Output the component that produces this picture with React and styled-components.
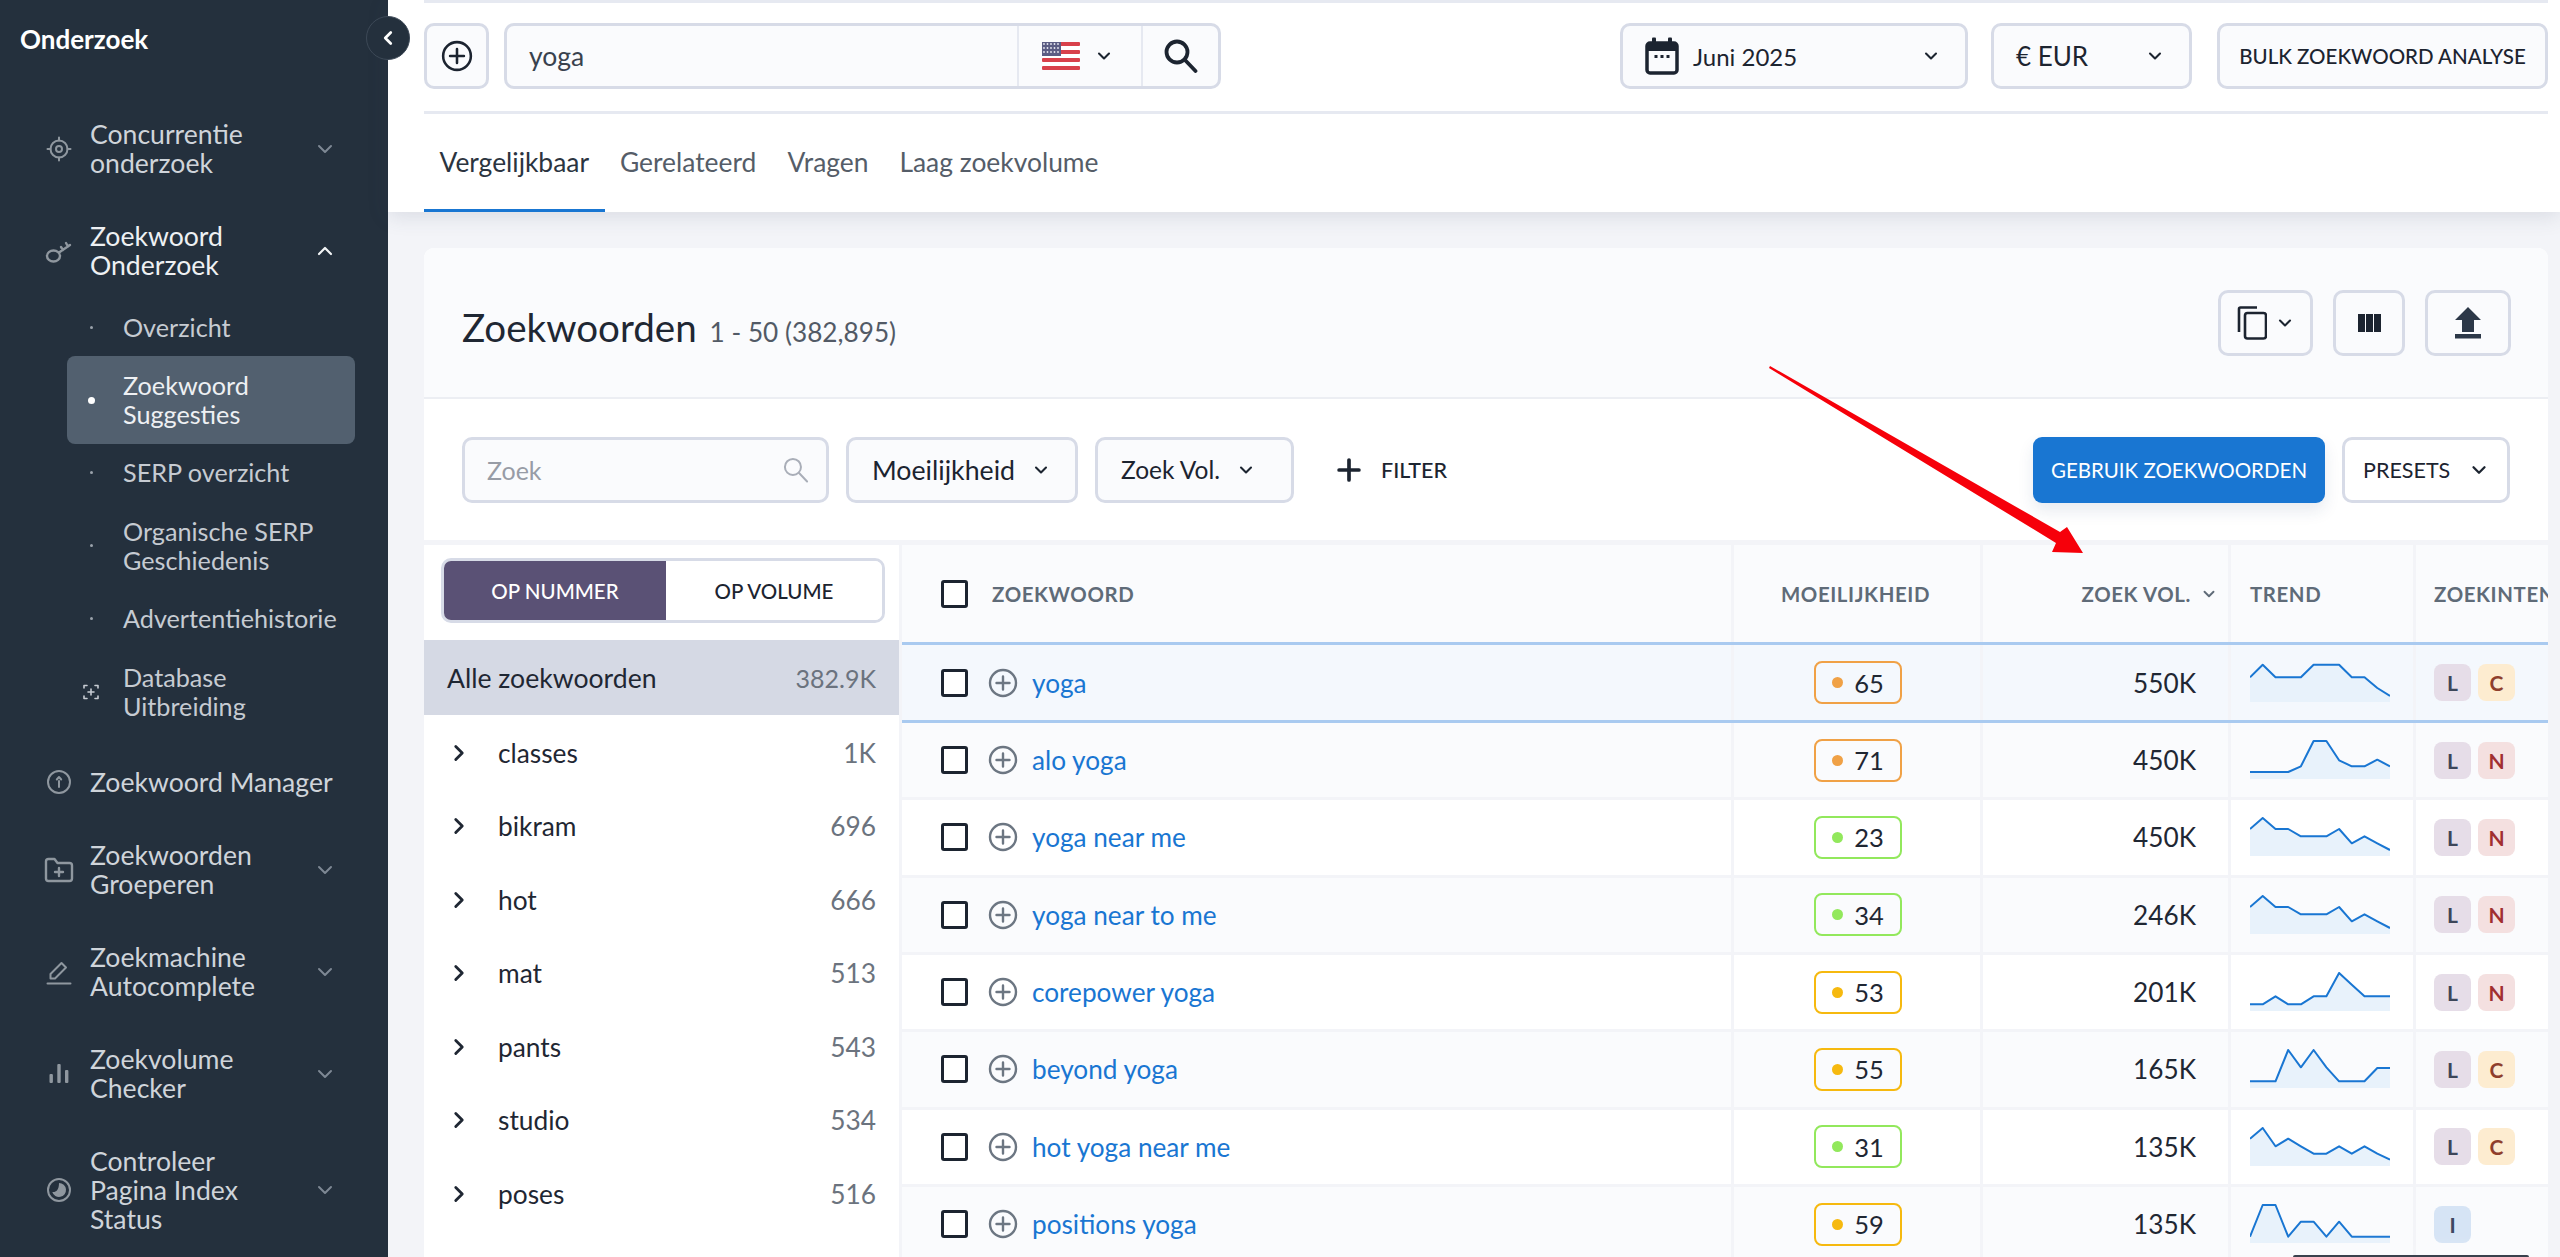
import React from "react";
import styled, { createGlobalStyle } from "styled-components";
import { ChevronDown, ChevronUp, ChevronLeft, ChevronRight, Plus } from "lucide-react";

const GlobalStyle = createGlobalStyle`
  * { box-sizing: border-box; }
  html, body { margin: 0; padding: 0; height: 100%; overflow: hidden; }
  body { font-family: Lato, "Open Sans", sans-serif; color: #1f2733; background: #f3f4f8; }
`;

const RowCols = "829px 249px 248px 185px 1fr";

const keywords = [
  { word: "yoga", diff: 65, level: "orange", vol: "550K", tags: ["L", "C"], trend: [14.3, 1.7, 14.3, 14.3, 14.3, 1.7, 1.7, 1.7, 14.3, 14.3, 25, 33] },
  { word: "alo yoga", diff: 71, level: "orange", vol: "450K", tags: ["L", "N"], trend: [32, 32, 32, 32, 26.3, 1, 1, 20.3, 26.3, 26.3, 19.7, 26.3] },
  { word: "yoga near me", diff: 23, level: "green", vol: "450K", tags: ["L", "N"], trend: [12, 1, 12, 12, 19.3, 19.3, 19.3, 12, 26.3, 19.3, 26.3, 33] },
  { word: "yoga near to me", diff: 34, level: "green", vol: "246K", tags: ["L", "N"], trend: [12, 1, 12, 12, 19.3, 19.3, 19.3, 12, 26.3, 19.3, 26.3, 33] },
  { word: "corepower yoga", diff: 53, level: "yellow", vol: "201K", tags: ["L", "N"], trend: [32.3, 32.3, 24.3, 32.3, 32.3, 24.3, 24.3, 1, 12.7, 24.3, 24.3, 24.3] },
  { word: "beyond yoga", diff: 55, level: "yellow", vol: "165K", tags: ["L", "C"], trend: [32.3, 32.3, 32.3, 1, 18.3, 1, 18.3, 32.3, 32.3, 32.3, 19, 19] },
  { word: "hot yoga near me", diff: 31, level: "green", vol: "135K", tags: ["L", "C"], trend: [11.7, 1, 19.3, 11.7, 19.3, 26.7, 26.7, 19.3, 26.7, 19.3, 26.7, 32.7] },
  { word: "positions yoga", diff: 59, level: "yellow", vol: "135K", tags: ["I"], trend: [32.7, 1, 1, 32.7, 17.7, 17.7, 32.7, 17.7, 32.7, 32.7, 32.7, 32.7] },
];

const groups = [
  ["classes", "1K"],
  ["bikram", "696"],
  ["hot", "666"],
  ["mat", "513"],
  ["pants", "543"],
  ["studio", "534"],
  ["poses", "516"],
];

const levelColors = { orange: "#f0a146", green: "#92e85c", yellow: "#f6b90f" };
const tagColors = {
  L: ["#e6dde8", "#3d4659"],
  C: ["#fdecd0", "#8f3f2c"],
  N: ["#f4e0e0", "#a12f31"],
  I: ["#d6e4f5", "#3d4862"],
};

const iconProps = { fill: "none", stroke: "currentColor", strokeWidth: 2, strokeLinecap: "round", strokeLinejoin: "round" };

const TargetIcon = () => (
  <svg width="26" height="26" viewBox="0 0 26 26" {...iconProps}>
    <circle cx="13" cy="13" r="8.5" />
    <circle cx="13" cy="13" r="3" />
    <path d="M13 1.5v3M13 21.5v3M1.5 13h3M21.5 13h3" />
  </svg>
);

const KeyIcon = () => (
  <svg width="28" height="28" viewBox="0 0 28 28" {...iconProps} strokeWidth="2.4">
    <ellipse cx="8.5" cy="19" rx="6.5" ry="5.5" />
    <path d="M14 15.500 25 8M18 13l-2-3M23 9.500l-2-3.500" />
  </svg>
);

const PageIcon = () => (
  <svg width="18" height="18" viewBox="0 0 18 18" {...iconProps} strokeWidth="1.6">
    <path d="M2 5V2.500h3M13 2.500h3V5M16 13v2.500h-3M5 15.500H2V13M9 6v6M6 9h6" />
  </svg>
);

const AlertIcon = () => (
  <svg width="26" height="26" viewBox="0 0 26 26" {...iconProps}>
    <circle cx="13" cy="13" r="11" />
    <path d="M13 18v-6M10.800 10.500 13 8l2.200 2.500" />
  </svg>
);

const FolderIcon = () => (
  <svg width="30" height="26" viewBox="0 0 30 26" {...iconProps} strokeWidth="2.4">
    <path d="M2 4.500C2 3 3 2 4.500 2h6l3 4h12c1.500 0 2.500 1 2.500 2.500v13c0 1.500-1 2.500-2.500 2.500h-21C3 24 2 23 2 21.500z" />
    <path d="M15 11v8M11 15h8" />
  </svg>
);

const PenIcon = () => (
  <svg width="26" height="26" viewBox="0 0 26 26" {...iconProps}>
    <path d="M1.500 24.500h23" />
    <path d="M4.500 19.500v-4.500L15.500 4l4.500 4.500-11 11z" />
  </svg>
);

const BarsIcon = () => (
  <svg width="20" height="22" viewBox="0 0 20 22" fill="currentColor">
    <rect x="0.500" y="11" width="3.400" height="9" rx="1" />
    <rect x="8.300" y="1" width="3.400" height="19" rx="1" />
    <rect x="16" y="7" width="3.400" height="13" rx="1" />
  </svg>
);

const PieIcon = () => (
  <svg width="26" height="26" viewBox="0 0 26 26" fill="none">
    <circle cx="13" cy="13" r="11" stroke="currentColor" strokeWidth="2" />
    <path d="M13 6a7 7 0 1 1-6.700 9c3.500.500 6.700-1.700 6.700-9z" fill="currentColor" />
  </svg>
);

const CirclePlusIcon = ({ size = 30, weight = 2.4 }) => (
  <svg width={size} height={size} viewBox="0 0 30 30" fill="none" stroke="currentColor" strokeWidth={weight} strokeLinecap="round">
    <circle cx="15" cy="15" r="13" />
    <path d="M15 8.500v13M8.500 15h13" />
  </svg>
);

const SearchGlyph = ({ size = 34, color = "#1c2430", weight = 3.800 }) => (
  <svg width={size} height={size} viewBox="0 0 34 34" fill="none" stroke={color} strokeWidth={weight} strokeLinecap="round">
    <circle cx="13" cy="13" r="10.500" />
    <path d="M21 21l10.500 11" />
  </svg>
);

const FlagIcon = () => (
  <svg width="38" height="28" viewBox="0 0 38 28">
    <rect width="38" height="28" rx="2" fill="#fff" />
    {[0, 2, 4, 6].map((i) => (
      <rect key={i} y={i * 4} width="38" height="4" rx="1" fill="#d8414b" />
    ))}
    <rect width="19" height="14" fill="#5b5d84" />
    {[2, 6, 10].map((y) =>
      [2, 5.500, 9, 12.500, 16].map((x) => <circle key={`${x}-${y}`} cx={x} cy={y} r="0.900" fill="#e8e9f2" />)
    )}
  </svg>
);

const CalendarIcon = () => (
  <svg width="34" height="38" viewBox="0 0 34 38" fill="none">
    <rect x="2" y="6" width="30" height="30" rx="3" stroke="#1c2430" strokeWidth="3.500" />
    <path d="M2 6h30v8H2z" fill="#1c2430" />
    <rect x="7" y="0.500" width="4" height="8" rx="1" fill="#1c2430" />
    <rect x="23" y="0.500" width="4" height="8" rx="1" fill="#1c2430" />
    <path d="M9.500 19.500h3M15.500 19.500h3M21.500 19.500h3" stroke="#1c2430" strokeWidth="3" />
  </svg>
);

const CopyIcon = () => (
  <svg width="30" height="34" viewBox="0 0 30 34" fill="none" stroke="#1c2430" strokeWidth="2.600" strokeLinejoin="round">
    <path d="M2 26V3c0-.800.600-1.500 1.500-1.500H20" />
    <rect x="8" y="7" width="21" height="25.500" rx="2.500" />
  </svg>
);

const ColumnsIcon = () => (
  <svg width="23" height="18" viewBox="0 0 23 18" fill="#1c2430">
    <rect width="7" height="18" />
    <rect x="8" width="7" height="18" />
    <rect x="16" width="7" height="18" />
  </svg>
);

const UploadIcon = () => (
  <svg width="26" height="32" viewBox="0 0 26 32" fill="#2c3848">
    <path d="M13 0 26 13h-7v12H7V13H0z" />
    <rect y="27" width="26" height="4.500" />
  </svg>
);

const ArrowIcon = () => (
  <svg width="330" height="200" viewBox="0 0 330 200">
    <polygon points="10,6 300,172 307,167 323,193 292,192 296,183 9,8" fill="#f6000a" />
  </svg>
);

const Sparkline = ({ points }) => {
  const step = 140 / (points.length - 1);
  const line = points.map((y, i) => `${(i * step).toFixed(1)},${y}`).join(" ");
  return (
    <svg width="140" height="40" viewBox="0 0 140 40">
      <polygon points={`0,39 ${line} 140,39`} fill="#e8f2fb" />
      <polyline points={line} fill="none" stroke="#1976d2" strokeWidth="2" strokeLinejoin="round" />
    </svg>
  );
};

const Lines = ({ text }) =>
  text.split("|").map((line) => <div key={line}>{line}</div>);

const NavEntry = ({ icon, label, open, chevron = true }) => (
  <NavItem $chevron={chevron} $open={open}>
    <NavIcon>{icon}</NavIcon>
    <NavText>
      <Lines text={label} />
    </NavText>
    {chevron && (open ? <ChevronUp size={24} strokeWidth={2.200} color="#f2f4f6" /> : <ChevronDown size={24} strokeWidth={2} color="#7e8894" />)}
  </NavItem>
);

const SubEntry = ({ label, active, icon }) => (
  <SubItem $active={active}>
    <SubMark>{icon || <Dot $active={active} />}</SubMark>
    <div>
      <Lines text={label} />
    </div>
  </SubItem>
);

const App = () => (
  <Page>
    <GlobalStyle />
    <Sidebar>
      <SidebarTitle>Onderzoek</SidebarTitle>
      <NavEntry icon={<TargetIcon />} label="Concurrentie|onderzoek" />
      <NavEntry icon={<KeyIcon />} label="Zoekwoord|Onderzoek" open />
      <SubList>
        <SubEntry label="Overzicht" />
        <SubEntry label="Zoekwoord|Suggesties" active />
        <SubEntry label="SERP overzicht" />
        <SubEntry label="Organische SERP|Geschiedenis" />
        <SubEntry label="Advertentiehistorie" />
        <SubEntry label="Database|Uitbreiding" icon={<PageIcon />} />
      </SubList>
      <NavEntry icon={<AlertIcon />} label="Zoekwoord Manager" chevron={false} />
      <NavEntry icon={<FolderIcon />} label="Zoekwoorden|Groeperen" />
      <NavEntry icon={<PenIcon />} label="Zoekmachine|Autocomplete" />
      <NavEntry icon={<BarsIcon />} label="Zoekvolume|Checker" />
      <NavEntry icon={<PieIcon />} label="Controleer|Pagina Index|Status" />
    </Sidebar>
    <CollapseButton>
      <ChevronLeft size={22} strokeWidth={3} color="#fff" />
    </CollapseButton>

    <Main>
      <TopBar>
        <SearchRow>
          <OutlineButton $width={65}>
            <CirclePlusIcon size={32} />
          </OutlineButton>
          <SearchBox>
            <SearchField>yoga</SearchField>
            <CountryPick>
              <FlagIcon />
              <ChevronDown size={20} strokeWidth={2.500} />
            </CountryPick>
            <SearchSubmit>
              <SearchGlyph />
            </SearchSubmit>
          </SearchBox>
          <Spacer />
          <SelectButton $width={348} $gap={14}>
            <CalendarIcon />
            <SelectLabel>Juni 2025</SelectLabel>
            <ChevronDown size={20} strokeWidth={2.500} />
          </SelectButton>
          <SelectButton $width={201} $gap={0}>
            <SelectLabel $size={26}>€ EUR</SelectLabel>
            <ChevronDown size={20} strokeWidth={2.500} />
          </SelectButton>
          <BulkButton $width={331}>
            <BulkLabel>BULK ZOEKWOORD ANALYSE</BulkLabel>
          </BulkButton>
        </SearchRow>
        <Tabs>
          <Tab $active>Vergelijkbaar</Tab>
          <Tab>Gerelateerd</Tab>
          <Tab>Vragen</Tab>
          <Tab>Laag zoekvolume</Tab>
        </Tabs>
      </TopBar>

      <Card>
        <CardHeader>
          <CardTitle>
            Zoekwoorden <CardCount>1 - 50 (382,895)</CardCount>
          </CardTitle>
          <HeaderActions>
            <OutlineButton $width={95}>
              <CopyIcon />
              <ChevronDown size={20} strokeWidth={2.500} />
            </OutlineButton>
            <OutlineButton $width={72}>
              <ColumnsIcon />
            </OutlineButton>
            <OutlineButton $width={86}>
              <UploadIcon />
            </OutlineButton>
          </HeaderActions>
        </CardHeader>

        <FilterRow>
          <FilterSearch>
            Zoek
            <SearchGlyph size={26} color="#a9aeb8" weight={2.600} />
          </FilterSearch>
          <FilterSelect $width={232} $size={26.700}>
            Moeilijkheid
            <ChevronDown size={20} strokeWidth={2.500} />
          </FilterSelect>
          <FilterSelect $width={199} $size={24.500}>
            Zoek Vol.
            <ChevronDown size={20} strokeWidth={2.500} />
          </FilterSelect>
          <AddFilter>
            <Plus size={34} strokeWidth={2.600} />
            FILTER
          </AddFilter>
          <Spacer />
          <PrimaryButton>GEBRUIK ZOEKWOORDEN</PrimaryButton>
          <PresetButton>
            PRESETS
            <ChevronDown size={22} strokeWidth={2.500} />
          </PresetButton>
        </FilterRow>

        <Body>
          <GroupPanel>
            <Toggle>
              <ToggleOption $active>OP NUMMER</ToggleOption>
              <ToggleOption>OP VOLUME</ToggleOption>
            </Toggle>
            <AllRow>
              <AllLabel>Alle zoekwoorden</AllLabel>
              <GroupCount>382.9K</GroupCount>
            </AllRow>
            {groups.map(([name, count]) => (
              <GroupRow key={name}>
                <ChevronRight size={26} strokeWidth={2.600} />
                <GroupName>{name}</GroupName>
                <GroupCount>{count}</GroupCount>
              </GroupRow>
            ))}
          </GroupPanel>

          <Table>
            <HeadRow>
              <WordCell>
                <Checkbox />
                <HeadText $gap={24}>ZOEKWOORD</HeadText>
              </WordCell>
              <DiffCell>
                <HeadText>MOEILIJKHEID</HeadText>
              </DiffCell>
              <VolCell $head>
                <HeadText>ZOEK VOL.</HeadText>
                <ChevronDown size={18} strokeWidth={2.500} color="#5f6b78" />
              </VolCell>
              <TrendCell>
                <HeadText>TREND</HeadText>
              </TrendCell>
              <IntentCell>
                <HeadText>ZOEKINTENTIE</HeadText>
              </IntentCell>
            </HeadRow>
            {keywords.map((row, i) => (
              <Row key={row.word} $selected={i === 0} $shaded={i % 2 === 1}>
                <WordCell>
                  <Checkbox />
                  <RowPlus>
                    <CirclePlusIcon size={30} weight={2.400} />
                  </RowPlus>
                  <WordLink>{row.word}</WordLink>
                </WordCell>
                <DiffCell>
                  <DiffBadge $level={row.level}>
                    <DiffDot $level={row.level} />
                    {row.diff}
                  </DiffBadge>
                </DiffCell>
                <VolCell>{row.vol}</VolCell>
                <TrendCell>
                  <Sparkline points={row.trend} />
                </TrendCell>
                <IntentCell>
                  {row.tags.map((tag) => (
                    <IntentTag key={tag} $tag={tag}>
                      {tag}
                    </IntentTag>
                  ))}
                </IntentCell>
              </Row>
            ))}
          </Table>
        </Body>
      </Card>
    </Main>

    <RedArrow>
      <ArrowIcon />
    </RedArrow>
    <PeekingBar />
  </Page>
);

const Page = styled.div`
  position: relative;
  display: flex;
  width: 100vw;
  height: 100vh;
  overflow: hidden;
`;

const Sidebar = styled.aside`
  flex: 0 0 388px;
  background: #24303d;
  color: #cfd4da;
  font-size: 26.600px;
  line-height: 29px;
`;

const SidebarTitle = styled.div`
  height: 98px;
  padding: 24px 0 0 20px;
  font-size: 26px;
  font-weight: 700;
  line-height: 30px;
  color: #fff;
`;

const NavItem = styled.div`
  display: grid;
  grid-template-columns: ${(p) => (p.$chevron ? "30px 207px 24px" : "30px 1fr")};
  column-gap: 16px;
  align-items: center;
  padding: 22px 0 22px 44px;
  color: ${(p) => (p.$open ? "#eef0f3" : "inherit")};
`;

const NavIcon = styled.div`
  display: flex;
  justify-content: center;
  color: #8f979f;
`;

const NavText = styled.div`
  white-space: nowrap;
`;

const SubList = styled.div`
  margin: -4px 33px 10.500px 67px;
  font-size: 25.200px;
`;

const SubItem = styled.div`
  display: grid;
  grid-template-columns: 32px 1fr;
  column-gap: 16px;
  align-items: center;
  padding: 14.700px 0 14.700px 8px;
  border-radius: 8px;
  background: ${(p) => (p.$active ? "#52606f" : "transparent")};
  color: ${(p) => (p.$active ? "#eef0f3" : "#c6cbd2")};
`;

const SubMark = styled.div`
  display: flex;
  justify-content: center;
  color: #c6cbd2;
`;

const Dot = styled.span`
  width: ${(p) => (p.$active ? 7 : 3)}px;
  height: ${(p) => (p.$active ? 7 : 3)}px;
  border-radius: 50%;
  background: ${(p) => (p.$active ? "#fff" : "#9aa2ab")};
`;

const CollapseButton = styled.div`
  position: absolute;
  left: 366px;
  top: 16px;
  z-index: 3;
  width: 44px;
  height: 44px;
  display: flex;
  align-items: center;
  justify-content: center;
  border-radius: 50%;
  background: #24303d;
  border: 1px solid #3d4957;
`;

const Main = styled.main`
  flex: 1;
  min-width: 0;
  display: flex;
  flex-direction: column;
  background: #f3f4f8;
`;

const TopBar = styled.header`
  flex: 0 0 212px;
  padding: 0 12px 0 36px;
  background: #fff;
  box-shadow: 0 4px 20px rgba(60, 70, 100, 0.14);
  z-index: 1;
`;

const SearchRow = styled.div`
  display: flex;
  align-items: center;
  gap: 23px;
  height: 114px;
  padding-bottom: 2px;
  border-top: 3px solid #e6e9f1;
  border-bottom: 3px solid #e6e9f1;
`;

const Spacer = styled.div`
  flex: 1;
`;

const OutlineButton = styled.div`
  flex: 0 0 ${(p) => p.$width}px;
  height: 66px;
  display: flex;
  align-items: center;
  justify-content: center;
  gap: 8px;
  border: 3px solid #d7dbe7;
  border-radius: 10px;
  background: #fafbfd;
  color: #1c2430;
`;

const BulkButton = styled(OutlineButton)`
  margin-left: 2px;
`;

const SearchBox = styled.div`
  flex: 0 0 717px;
  height: 66px;
  margin-left: -8px;
  display: flex;
  border: 3px solid #d7dbe7;
  border-radius: 10px;
  background: #fafbfd;
  color: #1c2430;
`;

const SearchField = styled.div`
  flex: 1;
  display: flex;
  align-items: center;
  padding-left: 22px;
  font-size: 26.500px;
  color: #39424e;
`;

const CountryPick = styled.div`
  flex: 0 0 124px;
  display: flex;
  align-items: center;
  gap: 14px;
  padding-left: 23px;
  border-left: 2px solid #e6e9f1;
`;

const SearchSubmit = styled.div`
  flex: 0 0 77px;
  display: flex;
  align-items: center;
  justify-content: center;
  border-left: 2px solid #e6e9f1;
`;

const SelectButton = styled(OutlineButton)`
  justify-content: flex-start;
  gap: ${(p) => p.$gap}px;
  padding: 0 24px 0 22px;
  & > svg:last-child {
    margin-left: auto;
  }
`;

const SelectLabel = styled.span`
  font-size: ${(p) => p.$size || 24}px;
  color: #1c2430;
`;

const BulkLabel = styled.span`
  font-size: 20.500px;
  font-weight: 500;
  white-space: nowrap;
`;

const Tabs = styled.nav`
  display: flex;
  height: 98px;
`;

const Tab = styled.div`
  display: flex;
  align-items: center;
  padding: 0 15.500px;
  font-size: 26.400px;
  color: ${(p) => (p.$active ? "#2b3440" : "#555d68")};
  border-bottom: 3px solid ${(p) => (p.$active ? "#1976d2" : "transparent")};
`;

const Card = styled.section`
  flex: 1;
  min-height: 0;
  margin: 36px 12px 0 36px;
  display: flex;
  flex-direction: column;
  border-radius: 10px 10px 0 0;
  overflow: hidden;
  background: #fff;
`;

const CardHeader = styled.div`
  flex: 0 0 151px;
  display: flex;
  align-items: center;
  justify-content: space-between;
  padding: 0 37px 0 38px;
  background: #fafbfd;
  border-bottom: 2px solid #eceef3;
`;

const CardTitle = styled.h2`
  margin: 8px 0 0;
  font-size: 38.600px;
  font-weight: 400;
  color: #1f2733;
`;

const CardCount = styled.span`
  margin-left: 3px;
  font-size: 26.200px;
  color: #525a66;
`;

const HeaderActions = styled.div`
  display: flex;
  gap: 20px;
`;

const FilterRow = styled.div`
  flex: 0 0 141px;
  display: flex;
  align-items: center;
  gap: 17px;
  padding: 0 38px;
`;

const FilterSearch = styled.div`
  flex: 0 0 367px;
  height: 66px;
  display: flex;
  align-items: center;
  justify-content: space-between;
  padding: 0 17px 0 22px;
  border: 3px solid #d7dbe7;
  border-radius: 10px;
  background: #fafbfd;
  font-size: 25px;
  color: #979ca6;
`;

const FilterSelect = styled.div`
  flex: 0 0 ${(p) => p.$width}px;
  height: 66px;
  display: flex;
  align-items: center;
  gap: 16px;
  padding-left: 23px;
  border: 3px solid #d7dbe7;
  border-radius: 10px;
  background: #fafbfd;
  font-size: ${(p) => p.$size}px;
  color: #1c2430;
`;

const AddFilter = styled.div`
  display: flex;
  align-items: center;
  gap: 15px;
  margin-left: 21px;
  font-size: 21.500px;
  font-weight: 500;
  color: #1c2430;
`;

const PrimaryButton = styled.div`
  flex: 0 0 292px;
  height: 66px;
  display: flex;
  align-items: center;
  justify-content: center;
  border-radius: 9px;
  background: #1976d2;
  box-shadow: 0 8px 16px rgba(25, 60, 110, 0.1);
  font-size: 20.500px;
  color: #fff;
  white-space: nowrap;
`;

const PresetButton = styled.div`
  flex: 0 0 168px;
  height: 66px;
  display: flex;
  align-items: center;
  gap: 18px;
  padding-left: 18px;
  border: 3px solid #d7dbe7;
  border-radius: 10px;
  background: #fff;
  font-size: 21.500px;
  color: #1c2430;
`;

const Body = styled.div`
  flex: 1;
  min-height: 0;
  display: grid;
  grid-template-columns: 475px 1fr;
  column-gap: 3px;
  border-top: 5px solid #f3f4f8;
  background: #f3f4f8;
`;

const GroupPanel = styled.div`
  background: #fff;
  padding-top: 13px;
`;

const Toggle = styled.div`
  display: grid;
  grid-template-columns: 222px 1fr;
  height: 65px;
  margin: 0 14px 17px 17px;
  border: 3px solid #d7dbe7;
  border-radius: 10px;
  overflow: hidden;
`;

const ToggleOption = styled.div`
  display: flex;
  align-items: center;
  justify-content: center;
  font-size: 20.500px;
  font-weight: 500;
  background: ${(p) => (p.$active ? "#5a5175" : "#fff")};
  color: ${(p) => (p.$active ? "#fff" : "#1c2430")};
`;

const AllRow = styled.div`
  height: 75px;
  margin-bottom: 1px;
  display: flex;
  align-items: center;
  justify-content: space-between;
  padding: 0 23px;
  background: #d5d9e4;
  font-size: 25px;
  color: #1f2733;
`;

const AllLabel = styled.span`
  font-size: 26.600px;
`;

const GroupRow = styled.div`
  height: 73.500px;
  display: flex;
  align-items: center;
  padding: 0 23px 0 22px;
  font-size: 26.300px;
`;

const GroupName = styled.span`
  flex: 1;
  margin-left: 26px;
`;

const GroupCount = styled.span`
  color: #6b737e;
`;

const Table = styled.div`
  background: #fff;
  overflow: hidden;
`;

const HeadRow = styled.div`
  display: grid;
  grid-template-columns: ${RowCols};
  height: 100px;
  background: #fafbfd;
  border-bottom: 3px solid #a9caf0;
`;

const Row = styled.div`
  display: grid;
  grid-template-columns: ${RowCols};
  height: ${(p) => (p.$selected ? 78 : 77.330)}px;
  background: ${(p) => (p.$selected ? "#f4f8fd" : p.$shaded ? "#fafbfd" : "#fff")};
  border-bottom: 3px solid ${(p) => (p.$selected ? "#a9caf0" : "#f3f4f8")};
  font-size: 26.200px;
`;

const Cell = styled.div`
  display: flex;
  align-items: center;
  min-width: 0;
  overflow: hidden;
  border-left: 3px solid #f3f4f8;
`;

const WordCell = styled(Cell)`
  padding-left: 39px;
  border-left: 0;
`;

const DiffCell = styled(Cell)`
  justify-content: center;
  padding-right: 3px;
`;

const VolCell = styled(Cell)`
  justify-content: flex-end;
  gap: 9px;
  padding-right: ${(p) => (p.$head ? 10 : 32)}px;
  color: #1f2733;
`;

const TrendCell = styled(Cell)`
  padding-left: 19px;
`;

const IntentCell = styled(Cell)`
  gap: 7px;
  padding-left: 18px;
`;

const HeadText = styled.span`
  margin-left: ${(p) => p.$gap || 0}px;
  font-size: 20.400px;
  font-weight: 700;
  letter-spacing: 0.6px;
  color: #5f6b78;
  white-space: nowrap;
`;

const Checkbox = styled.span`
  flex: 0 0 27px;
  height: 28px;
  border: 3px solid #1c2430;
  border-radius: 3px;
  background: #fff;
`;

const RowPlus = styled.span`
  display: flex;
  margin-left: 20px;
  color: #6c7682;
`;

const WordLink = styled.a`
  margin-left: 14px;
  color: #1976d2;
`;

const DiffBadge = styled.div`
  width: 88px;
  height: 43px;
  margin-left: 5px;
  display: flex;
  align-items: center;
  justify-content: center;
  gap: 11px;
  border: 2px solid ${(p) => levelColors[p.$level]};
  border-radius: 8px;
  font-size: 25.500px;
  color: #1f2733;
`;

const DiffDot = styled.span`
  width: 11px;
  height: 11px;
  border-radius: 50%;
  background: ${(p) => levelColors[p.$level]};
`;

const IntentTag = styled.span`
  width: 37px;
  height: 37px;
  display: flex;
  align-items: center;
  justify-content: center;
  border-radius: 8px;
  font-size: 21px;
  font-weight: 700;
  background: ${(p) => tagColors[p.$tag][0]};
  color: ${(p) => tagColors[p.$tag][1]};
`;

const RedArrow = styled.div`
  position: absolute;
  left: 1760px;
  top: 360px;
  z-index: 2;
  display: flex;
  pointer-events: none;
`;

const PeekingBar = styled.div`
  position: absolute;
  left: 2293px;
  bottom: 0;
  width: 236px;
  height: 2px;
  border-radius: 6px 6px 0 0;
  background: #39414d;
  box-shadow: 0 -6px 16px rgba(255, 255, 255, 0.9);
`;

export default App;
